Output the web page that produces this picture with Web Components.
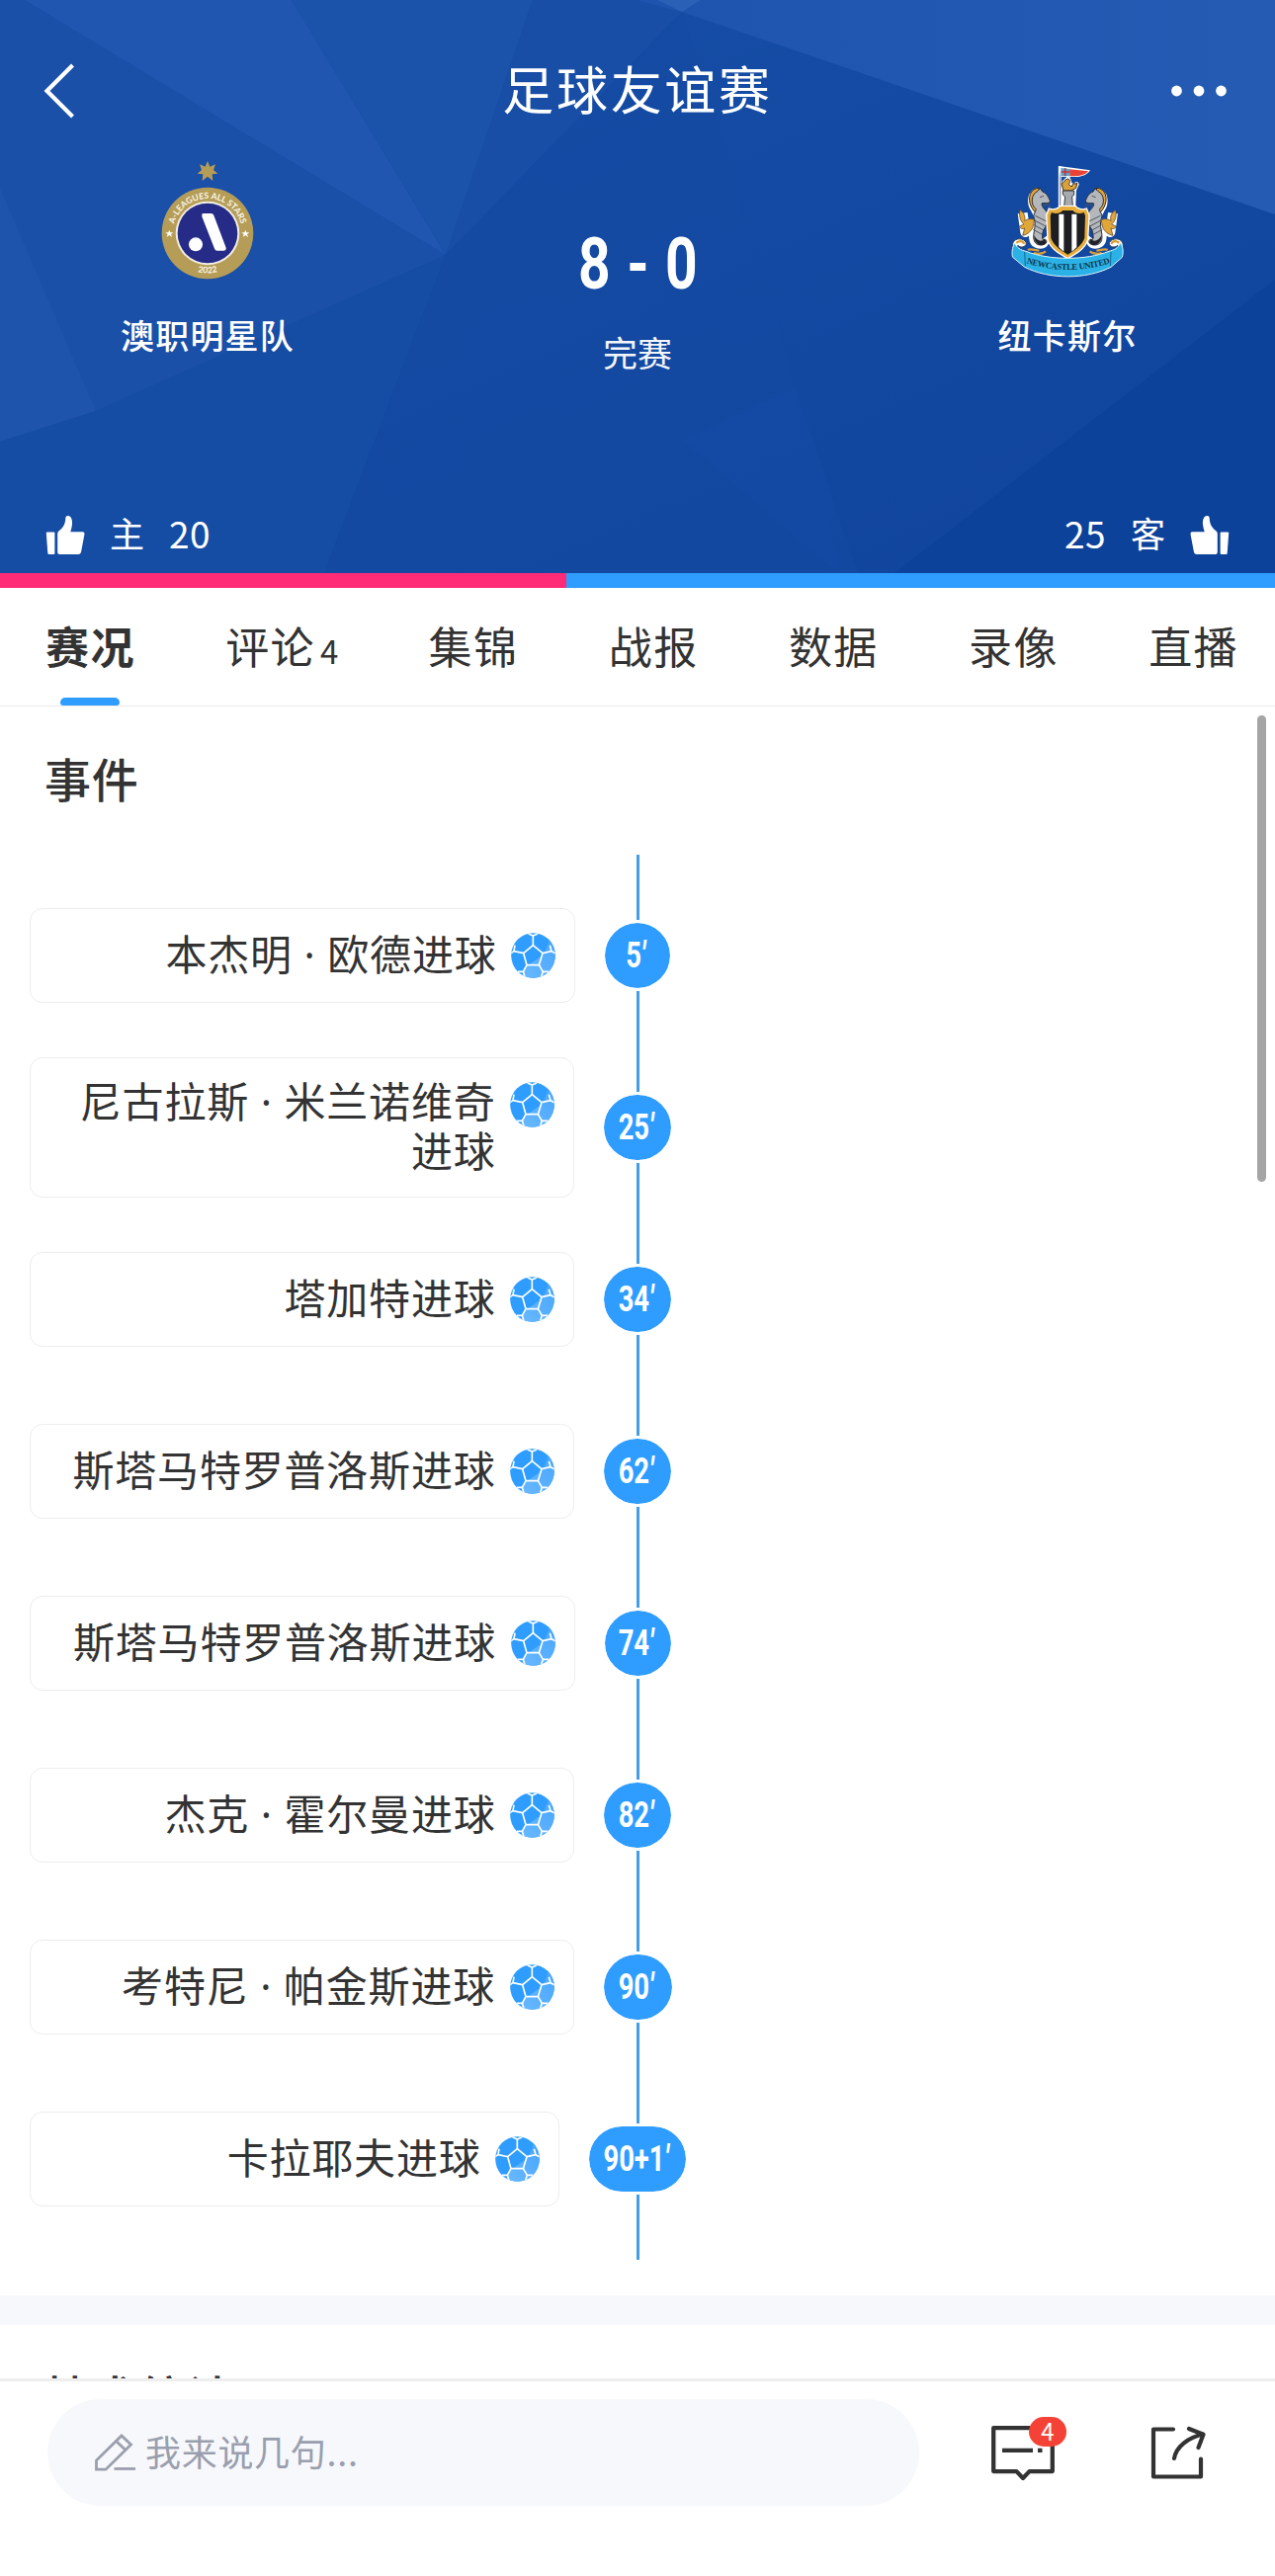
<!DOCTYPE html>
<html lang="zh-CN">
<head>
<meta charset="utf-8">
<title>足球友谊赛</title>
<style>
html,body{margin:0;padding:0;background:#fff}
body{width:1290px;height:2607px;overflow:hidden;font-family:"Noto Sans CJK SC",sans-serif;color:#333}
</style>
</head>
<body>
<match-app></match-app>
<script>
const define = (name, html) => {
  const t = document.createElement('template');
  t.innerHTML = html;
  customElements.define(name, class extends HTMLElement {
    constructor() {
      super();
      this.attachShadow({mode: 'open'}).appendChild(t.content.cloneNode(true));
    }
  });
};

define('crest-allstars', `
<style>:host{display:block;width:120px;height:135px}svg{display:block}text{font-family:Lato,"Open Sans",sans-serif;font-weight:700;fill:#fbf7e8}</style>
<svg width="120" height="135" viewBox="0 0 360 405">
  <defs><path id="a" d="M75 243a105 105 0 0 1 210 0"/><path id="b" d="M59 243a121 121 0 0 0 242 0"/></defs>
  <path fill="#b59d58" d="M180 24l7 17 17-7-6 17 13 11-17 2 2 20-16-13-16 13 2-20-17-2 13-11-6-17 17 7z"/>
  <circle cx="180" cy="243" r="139" fill="#b59d58"/>
  <circle cx="180" cy="243" r="97" fill="#f3efe2"/>
  <circle cx="180" cy="243" r="91" fill="#262b88"/>
  <path fill="#fff" stroke="#fff" stroke-width="8" stroke-linejoin="round" d="M167 187h24q3 0 4 3l37 98q1 4-3 4h-20q-3 0-4-3l-38-97z"/>
  <circle cx="144" cy="277" r="21" fill="#fff"/>
  <path fill="#fff" d="M64 233l3 8h9l-7 5 3 9-8-6-8 6 3-9-7-5h9zM295 233l3 8h9l-7 5 3 9-8-6-8 6 3-9-7-5h9z"/>
  <text font-size="26"><textPath href="#a" startOffset="50%" text-anchor="middle">A-LEAGUES ALL STARS</textPath></text>
  <text font-size="26"><textPath href="#b" startOffset="50%" text-anchor="middle">2022</textPath></text>
</svg>`);

define('crest-newcastle', `
<style>:host{display:block;width:140px;height:135px}svg{display:block}text{font-family:"Liberation Serif",serif;font-weight:700;fill:#10334a}</style>
<svg width="140" height="135" viewBox="0 0 420 405">
  <defs>
    <path id="r" d="M72 329q140 50 280 0"/>
    <g id="horse">
      <path fill="none" stroke="#fff" stroke-width="30" stroke-linejoin="round" d="M124 120c-22 4-24 32-10 50l12 24-16 40c-4 20-2 36 10 40 18 4 24-8 18-16M74 182l8 58 30-20"/>
      <path fill="#e0a63a" stroke="#4b3a1c" stroke-width="2" d="M66 172c10 8 18 18 14 34 10-8 22-8 30-2l-6 24c-6 10-16 20-30 22l6-22c-8 4-14 0-16-6l14-6c-12-10-16-28-12-44z"/>
      <path fill="#e0a63a" stroke="#33291a" stroke-width="3" d="M124 106c-28 0-36 32-24 56 6 14 16 18 16 26l14-30-10-20z"/>
      <path fill="#b4b8bd" stroke="#2b2e35" stroke-width="3" d="M128 107l6 10c12 4 18 14 24 30-8 8-18 2-26 6-2 14 22 22 22 46-2 20-18 28-20 46 0 8-2 12 2 18 8-4 12 2 10 8-6 12-34 12-38-8-4-20 8-42 2-62-8-18 6-20 4-32-16-12-16-44 6-54z"/>
      <path fill="none" stroke="#51565e" stroke-width="3" d="M112 190l36 18M110 204l34 18M108 218l30 16M106 232l26 14M134 160l18-6 10 18M126 134l12-4"/>
      <path fill="#20232b" d="M109 250c-2 24 20 38 38 22l-6-12c-8 10-24 8-32-10z"/>
      <path fill="#fff" stroke="#31404a" stroke-width="3" d="M46 270c10-18 44-8 38 8-6 10-20 8-24 2l-10 14c-8-6-8-18-4-24z"/>
      <path fill="none" stroke="#d99e34" stroke-width="7" d="M55 272c12-8 24-4 22 4M90 294c10-6 22 2 34 2M108 302c10 6 26 4 36-4"/>
    </g>
  </defs>
  <path d="M187 40v135" stroke="#fff" stroke-width="9"/><path d="M188 42v130" stroke="#7e7e86" stroke-width="3"/>
  <path fill="#fff" d="M183 39l46 6 50 7c-10 16-32 22-54 20l-36 0z"/>
  <path fill="#5ba8cf" d="M190 45l28 3v22h-28z"/>
  <path stroke="#c8323d" stroke-width="5" d="M203 46v23M191 57h27"/>
  <path fill="#ea4335" d="M217 49l57 6c-12 12-32 17-57 14z"/>
  <path stroke="#fff" stroke-width="14" stroke-linejoin="round" fill="#fff" d="M200 90l12-12 8 24 18-8-8 18-2 46h-30v-46z"/>
  <path fill="#dba23b" stroke="#3c301b" stroke-width="3" d="M192 92c8-2 10-14 20-14 8 2 6 12 2 16l8 8 8-12 4 4 6-4-4 16-14 8h-24z"/>
  <path fill="#a7abb1" stroke="#33363d" stroke-width="3" d="M196 114h34v12l-6 6 2 28h-26l3-28-7-6z"/>
  <use href="#horse"/><use href="#horse" transform="matrix(-1 0 0 1 422 0)"/>
  <path fill="#e8ae3c" stroke="#fff" stroke-width="4" d="M154 168c14 6 28 0 34-8h46c6 8 20 14 34 8l8 20-4 74c-8 28-36 44-61 58-25-14-53-30-61-58l-4-74z"/>
  <path fill="#1d1e22" d="M162 180c14 6 26 2 34-6h30c8 8 20 12 34 6l4 10-2 68c-8 22-28 36-51 50-23-14-43-28-51-50l-2-68z"/>
  <path fill="#fff" d="M184 185h15v114l-15-13zM223 185h15v101l-15 13z"/>
  <path fill="#2ab2e6" stroke="#dff3fb" stroke-width="3" d="M50 272c-8 14-10 34-6 44l36 30c76 38 186 38 262 0l34-30c4-12 4-32-6-44-6 18-20 22-34 26-70 28-180 28-252 0-16-4-28-10-34-26z"/>
  <path fill="none" stroke="#17658c" stroke-width="3" d="M80 300l2 42M342 300l-2 42"/>
  <text font-size="26" letter-spacing="-1"><textPath href="#r" startOffset="50%" text-anchor="middle">NEWCASTLE UNITED</textPath></text>
</svg>`);

define('team-badge', `
<style>
:host{display:flex;flex-direction:column;align-items:center;width:300px}
.name{margin-top:29px;font-size:34px;line-height:40px;font-weight:500;letter-spacing:1.2px;color:#fff;white-space:nowrap}
</style><slot name="crest"></slot><div class="name"><slot></slot></div>`);

define('thumb-icon', `
<style>:host{display:block;width:40px;height:40px}svg{display:block}</style>
<svg width="40" height="40" viewBox="0 0 40 40" fill="#fff"><path d="M1.8 16.5h6.6q1 0 1 1V38q0 1-1 1H3.6q-1.200 0-1.300-1.200L.8 17.600q0-1.100 1-1.100z"/><path d="M12.200 18q0-1.800 1.500-2.800C18 12 20 8.500 20.300 2.500 20.400.6 21.600 0 22.800 0c3.400 0 4.800 5 4.100 9.500-.3 2.400-.9 4.600-1.600 6.700h12.200q2.300 0 2 2.200l-3.400 18.200q-.5 2.500-3 2.500H14.200q-2 0-2-2z"/></svg>`);

define('match-header', `
<style>
:host{display:block;height:595px;color:#fff;position:relative}
.art{position:absolute;left:0;top:0;width:1290px;height:580px}
.body{position:relative;height:580px;display:flex;flex-direction:column}
.nav{display:flex;align-items:center;justify-content:space-between;height:155px;padding:28px 44px 0 44px;box-sizing:border-box}
.title{font-size:52px;letter-spacing:2.7px;line-height:70px;padding-bottom:6px}
.nav svg{display:block}
.teams{display:flex;justify-content:space-between;height:320px;padding:0 60px 0 60px}
.mid{display:flex;flex-direction:column;align-items:center;padding-top:73px}
.score{font-family:Roboto,sans-serif;font-weight:700;font-size:73px;line-height:78px;transform:scaleX(.78);white-space:nowrap;word-spacing:3px}
.state{margin-top:22px;font-size:35px;line-height:56px;opacity:.95}
.likes{display:flex;justify-content:space-between;padding:42px 46px 0;font-size:37px;line-height:44px}
.likes>div{display:flex;align-items:center;gap:25px}
.likes span{display:block;padding-bottom:5px;letter-spacing:.5px}
.likes .z{font-size:35px;letter-spacing:0}
.flip{transform:scaleX(-1)}
.bar{display:flex;height:15px;position:relative}
.h{flex:20;background:#ff2b76}.a{flex:25;background:#2e9dff}
</style>
<svg class="art" viewBox="0 0 1290 580" preserveAspectRatio="none">
  <defs><linearGradient id="g" x1="0" y1="0" x2="1" y2="1"><stop offset="0" stop-color="#174fa7"/><stop offset="1" stop-color="#10449d"/></linearGradient>
  <linearGradient id="t" x1="0" y1="0" x2="1" y2="0"><stop offset="0" stop-color="#1e54ad"/><stop offset="1" stop-color="#255bb3"/></linearGradient></defs>
  <path fill="url(#g)" d="M0 0h1290v580H0z"/>
  <path fill="#1a50a8" d="M0 0h25l426 258L97 416 0 447z"/>
  <path fill="#2056af" d="M25 0h270l156 258z"/>
  <path fill="#1b52aa" d="M295 0h244l-88 258z"/>
  <path fill="#184ea6" d="M539 0h151v12L451 258z"/>
  <path fill="#1e54ab" d="M0 190l97 226L0 447z"/>
  <path fill="#154ca4" d="M451 258L328 580H0V447l97-31z"/>
  <path fill="#134aa1" d="M690 12l93 298 67 270H328l123-322z" opacity=".5"/>
  <path fill="url(#t)" d="M645 0h645v217L690 12z"/>
  <path fill="#2b60b7" d="M665 0h44l-19 12z"/>
  <path fill="#0d429b" d="M1290 283v297H905z"/>
  <path fill="#184ea5" opacity=".35" d="M690 445l158 135h20L805 392z"/>
</svg>
<div class="body">
  <div class="nav">
    <svg width="80" height="60" viewBox="0 0 80 60"><path d="M29.500 4L3.500 30l26 26" fill="none" stroke="#fff" stroke-width="4.200"/></svg>
    <div class="title">足球友谊赛</div>
    <svg width="80" height="60" viewBox="0 0 80 60" fill="#fff"><circle cx="24.500" cy="30" r="5.400"/><circle cx="47" cy="30" r="5.400"/><circle cx="69.500" cy="30" r="5.400"/></svg>
  </div>
  <div class="teams">
    <team-badge><crest-allstars slot="crest"></crest-allstars>澳职明星队</team-badge>
    <div class="mid"><div class="score">8 - 0</div><div class="state">完赛</div></div>
    <team-badge><crest-newcastle slot="crest"></crest-newcastle>纽卡斯尔</team-badge>
  </div>
  <div class="likes">
    <div><thumb-icon></thumb-icon><span class="z">主</span><span>20</span></div>
    <div><span>25</span><span class="z">客</span><thumb-icon class="flip"></thumb-icon></div>
  </div>
</div>
<div class="bar"><div class="h"></div><div class="a"></div></div>`);

define('tab-item', `
<style>
:host{display:flex;flex-direction:column;align-items:center;justify-content:space-between;height:119px;font-size:44px;letter-spacing:1.400px;white-space:nowrap}
.l{padding-top:26px;line-height:64px;display:flex;align-items:baseline}
::slotted(small){font-size:33px;letter-spacing:0;margin-left:5px}
i{display:block;width:60px;height:8px;border-radius:5px 5px 3px 3px}
:host([active]){font-weight:700}
:host([active]) i{background:#2e9dff}
</style><div class="l"><slot></slot></div><i></i>`);

define('tab-bar', `
<style>:host{display:flex;justify-content:space-between;height:119px;padding:0 37px 0 46px;border-bottom:1px solid #eaeaea}</style><slot></slot>`);

define('ball-icon', `
<style>:host{display:block;width:45px;height:46px}svg{display:block}</style>
<svg width="45" height="46" viewBox="0 0 135 138">
  <defs><clipPath id="c"><ellipse cx="67.500" cy="69" rx="67" ry="68.500"/></clipPath>
  <linearGradient id="s" x1="1" y1="0" x2="0" y2="1"><stop offset="0" stop-color="#47a5fc"/><stop offset="1" stop-color="#6ab9ff"/></linearGradient></defs>
  <g clip-path="url(#c)">
    <path fill="#2e9dff" d="M0 0h135v138H0z"/>
    <path fill="url(#s)" d="M118 18L100 65 44 104 30 138h105V18z"/>
    <g fill="none" stroke="#fff" stroke-width="5" stroke-linejoin="round">
      <path d="M67 38L96 62 85 98H48L38 62z"/>
      <path d="M67 38V9M96 62l27-6M85 98l12 20M48 98l-11 20M38 62L9 56"/>
      <path d="M67 9L53 3M67 9l14-6M9 56L-2 63M9 56L12 38M123 56l13 7M123 56l-5-18M37 118H20M37 118l5 16M97 118h18M97 118l-5 16"/>
    </g>
  </g>
</svg>`);

define('goal-event', `
<style>
:host{display:grid;grid-template-columns:1fr auto 1fr;align-items:center;height:174px;column-gap:27px;padding:0 30px}
.card{display:flex;justify-content:flex-end;min-height:96px;box-sizing:border-box;border:1px solid #ededed;border-radius:13px;padding:0 19px 0 28px}
.txt{align-self:center;padding:19px 0 21px;text-align:right;font-family:"Noto Sans","Noto Sans CJK SC",sans-serif;font-size:42px;line-height:50px;letter-spacing:.8px}
ball-icon{flex:none;margin:24px 0 0 14.500px}
.pill{box-sizing:border-box;height:72px;width:var(--w,74px);border:3px solid #fff;border-radius:36px;background:#2e9dff;background-clip:padding-box;display:flex;align-items:center;justify-content:center;color:#fff;font-family:Roboto,sans-serif;font-weight:700;font-size:36px}
.pill span{display:block;transform:scaleX(.76);white-space:nowrap;margin-right:3px}
.mid{background:#fff}
</style>
<div class="card"><div class="txt"><slot></slot></div><ball-icon></ball-icon></div>
<div class="mid"><div class="pill"><span><slot name="t"></slot></span></div></div><div></div>`);

define('event-list', `
<style>
:host{display:block;padding:15px 0;background:linear-gradient(#459de9,#459de9) 644px 0/3px 100% no-repeat}
</style><slot></slot>`);

define('section-title', `
<style>:host{display:block;font-size:47px;line-height:70px;font-weight:500;letter-spacing:.8px;padding-left:45px;white-space:nowrap}</style><slot></slot>`);

define('match-content', `
<style>
:host{display:block;height:1692px;overflow:hidden;position:relative}
.a{padding-top:37px}
event-list{margin-top:43px}
.sep{height:30px;background:#f7f8fb;margin-top:36px}
.b{padding-top:36px}
.sb{position:absolute;left:1272px;top:9px;width:9px;height:472px;border-radius:5px;background:#a5a5a5}
</style>
<section-title class="a">事件</section-title>
<event-list>
<goal-event style="--w:72px">本杰明 · 欧德进球<span slot="t">5<i>′</i></span></goal-event>
<goal-event>尼古拉斯 · 米兰诺维奇进球<span slot="t">25<i>′</i></span></goal-event>
<goal-event>塔加特进球<span slot="t">34<i>′</i></span></goal-event>
<goal-event>斯塔马特罗普洛斯进球<span slot="t">62<i>′</i></span></goal-event>
<goal-event style="--w:73px">斯塔马特罗普洛斯进球<span slot="t">74<i>′</i></span></goal-event>
<goal-event>杰克 · 霍尔曼进球<span slot="t">82<i>′</i></span></goal-event>
<goal-event style="--w:75px">考特尼 · 帕金斯进球<span slot="t">90<i>′</i></span></goal-event>
<goal-event style="--w:104px">卡拉耶夫进球<span slot="t">90+1<i>′</i></span></goal-event>
</event-list>
<div class="sep"></div>
<section-title class="b">技术统计</section-title>
<div class="sb"></div>`);

define('comment-bar', `
<style>
:host{display:flex;box-sizing:border-box;height:200px;border-top:3px solid #eee;padding:18px 70px 0 48px;background:#fff;align-items:flex-start}
.in{display:flex;align-items:center;width:882px;height:108px;border-radius:54px;background:#f7f8fb;color:#9a9fae;font-size:36px;letter-spacing:.7px;padding-left:46px;box-sizing:border-box}
.in svg{margin-right:9px}
.in span{padding-bottom:5px}
.c{position:relative;margin:27px 0 0 73px}
.s{margin:26px 0 0 97px}
svg{display:block}
.n{position:absolute;left:38px;top:-9px;width:38px;height:30px;border-radius:15px;background:#f44336;color:#fff;font-size:24px;line-height:28px;text-align:center}
</style>
<div class="in"><svg width="44" height="40" viewBox="0 0 44 40" fill="none" stroke="#9a9fae" stroke-width="2.800"><path d="M3.500 37.200V28L29 3l9.500 9L13 37.200zM23.500 8.500l9.500 9"/><path d="M21.500 36.500H43"/></svg><span>我来说几句...</span></div>
<div class="c"><svg width="64" height="57" viewBox="0 0 64 57" fill="none" stroke="#333" stroke-width="4.300"><path stroke-linejoin="round" d="M2.200 2.200h59.600v43.900H38.500L32 53l-6.500-6.900H2.200z"/><path d="M11 24.800h31M47 24.800h4.500"/></svg><div class="n">4</div></div>
<div class="s"><svg width="56" height="56" viewBox="0 0 56 56" fill="none" stroke="#333" stroke-width="4.200" stroke-linecap="round" stroke-linejoin="round"><path d="M23 4.500H3V52.500H51V34.500M24 34C26 22 38 13 53 9.500M39 4l14.500 5.800L48.500 23"/></svg></div>`);

define('match-app', `
<style>:host{display:block;width:1290px;height:2607px;background:#fff}</style>
<match-header></match-header>
<tab-bar><tab-item active>赛况</tab-item><tab-item>评论<small>4</small></tab-item><tab-item>集锦</tab-item><tab-item>战报</tab-item><tab-item>数据</tab-item><tab-item>录像</tab-item><tab-item>直播</tab-item></tab-bar>
<match-content></match-content>
<comment-bar></comment-bar>`);
</script>
</body>
</html>
